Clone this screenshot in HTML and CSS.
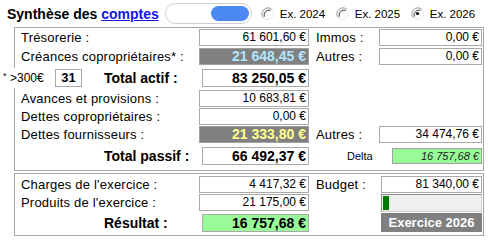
FILE: index.html
```html
<!DOCTYPE html>
<html lang="fr">
<head>
<meta charset="utf-8">
<title>Synthèse des comptes</title>
<link rel="stylesheet" href="styles.css">
</head>
<body>
<div class="head">
  <h1 class="title">Synthèse des <span class="link">comptes</span></h1>
  <div class="toggle"><span class="knob"></span></div>
  <div class="radios">
    <label class="radio"><svg width="13" height="13" viewBox="0 0 13 13"><circle cx="6.5" cy="6.5" r="6" fill="#fff" stroke="#e6e6e6"/><path d="M10.7 2.3 A6 6 0 0 0 2.3 10.7" fill="none" stroke="#a0a0a0"/><path d="M9.6 3.4 A4.8 4.8 0 0 0 3.4 9.6" fill="none" stroke="#404040"/></svg>Ex. 2024</label>
    <label class="radio"><svg width="13" height="13" viewBox="0 0 13 13"><circle cx="6.5" cy="6.5" r="6" fill="#fff" stroke="#e6e6e6"/><path d="M10.7 2.3 A6 6 0 0 0 2.3 10.7" fill="none" stroke="#a0a0a0"/><path d="M9.6 3.4 A4.8 4.8 0 0 0 3.4 9.6" fill="none" stroke="#404040"/></svg>Ex. 2025</label>
    <label class="radio"><svg width="13" height="13" viewBox="0 0 13 13"><circle cx="6.5" cy="6.5" r="6" fill="#fff" stroke="#e6e6e6"/><path d="M10.7 2.3 A6 6 0 0 0 2.3 10.7" fill="none" stroke="#a0a0a0"/><path d="M9.6 3.4 A4.8 4.8 0 0 0 3.4 9.6" fill="none" stroke="#404040"/><circle cx="6.5" cy="6.5" r="1.6" fill="#000"/></svg>Ex. 2026</label>
  </div>
</div>

<div class="group g1">
  <span class="lbl">Trésorerie :</span>
  <span class="val">61 601,60 €</span>
  <span></span>
  <span class="lbl">Immos :</span>
  <span class="val">0,00 €</span>

  <span class="lbl">Créances copropriétaires* :</span>
  <span class="val dark cyan">21 648,45 €</span>
  <span></span>
  <span class="lbl">Autres :</span>
  <span class="val">0,00 €</span>

  <div class="totcell">
    <div class="over"><span class="star">*</span><span class="small">&gt;300€</span><span class="count">31</span></div>
    <span class="totlbl">Total actif :</span>
  </div>
  <span class="val tot">83 250,05 €</span>
  <span class="span3"></span>

  <span class="lbl">Avances et provisions :</span>
  <span class="val">10 683,81 €</span>
  <span class="span3"></span>

  <span class="lbl">Dettes copropriétaires :</span>
  <span class="val">0,00 €</span>
  <span class="span3"></span>

  <span class="lbl">Dettes fournisseurs :</span>
  <span class="val dark yellow">21 333,80 €</span>
  <span></span>
  <span class="lbl">Autres :</span>
  <span class="val">34 474,76 €</span>

  <div class="totcell"><span></span><span class="totlbl">Total passif :</span></div>
  <span class="val tot">66 492,37 €</span>
  <span></span>
  <div class="delta"><span class="dlbl">Delta</span><span class="dval">16 757,68 €</span></div>
</div>

<div class="group g2">
  <span class="lbl">Charges de l'exercice :</span>
  <span class="val">4 417,32 €</span>
  <span></span>
  <span class="lbl">Budget :</span>
  <span class="val">81 340,00 €</span>

  <span class="lbl">Produits de l'exercice :</span>
  <span class="val">21 175,00 €</span>
  <span></span>
  <span></span>
  <div class="progress"><span class="fill" style="width:6px"></span></div>

  <div class="totcell"><span></span><span class="totlbl">Résultat :</span></div>
  <span class="val tot green">16 757,68 €</span>
  <span></span>
  <span></span>
  <span class="btn">Exercice 2026</span>
</div>
</body>
</html>
```

FILE: styles.css
```css
html, body {
  margin: 0;
  padding: 0;
  background: #fff;
}
body {
  width: 488px;
  height: 241px;
  overflow: hidden;
  font-family: "Liberation Sans", Arial, sans-serif;
  color: #000;
}
.head {
  height: 27px;
  display: flex;
  align-items: center;
}
.title {
  margin: 0 0 0 7px;
  font-size: 14px;
  font-weight: bold;
  white-space: nowrap;
}
.link {
  color: #1414e6;
  text-decoration: underline;
}
.toggle {
  margin-left: 6px;
  width: 87px;
  height: 21px;
  box-sizing: border-box;
  border: 1px solid #cfcfcf;
  border-radius: 11px;
  background: #fff;
  display: flex;
  justify-content: flex-end;
  align-items: center;
  padding-right: 2px;
}
.knob {
  width: 38px;
  height: 15px;
  border-radius: 8px;
  background: #4b88f2;
}
.radios {
  display: flex;
  margin-left: 9px;
}
.radio {
  width: 75px;
  display: flex;
  align-items: center;
  font-size: 11.5px;
  white-space: nowrap;
}
.radio svg {
  margin-right: 6px;
  flex: none;
}
.group {
  margin-left: 14px;
  width: 470px;
  box-sizing: border-box;
  border: 1px solid #a6a6a6;
  display: grid;
  align-items: center;
}
.g1 {
  padding: 0 1px 2px 6px;
  grid-template-columns: 178px 110px 7px 63px 103px;
  grid-template-rows: 19px 19px 23px 18px 18px 19px 24px;
}
.g2 {
  margin-top: 2px;
  padding: 1px 1px 2px 6px;
  grid-template-columns: 178px 110px 7px 65px 101px;
  grid-template-rows: 18px 19px 21px;
}
.lbl {
  font-size: 13px;
  letter-spacing: 0.2px;
  white-space: nowrap;
}
.val {
  height: 17px;
  box-sizing: border-box;
  border: 1px solid #a9a9a9;
  padding-right: 2px;
  text-align: right;
  font-size: 12px;
  line-height: 15px;
  white-space: nowrap;
  background: #fff;
}
.dark {
  background: #808080;
  border-color: #a0a0a0;
  font-weight: bold;
  font-size: 14px;
}
.cyan { color: #b3e5fc; }
.yellow { color: #ffff8c; }
.tot {
  height: 18px;
  margin-left: 3px;
  font-weight: bold;
  font-size: 14px;
  line-height: 16px;
}
.green { background: #98fb98; }
.span3 { grid-column: span 3; }
.totcell {
  display: grid;
  grid-template-columns: 83px auto;
  align-items: center;
}
.totlbl {
  font-size: 14px;
  font-weight: bold;
  white-space: nowrap;
}
.over {
  display: flex;
  align-items: center;
  margin-left: -19px;
  background: #fff;
  width: 80px;
  height: 20px;
}
.star {
  font-size: 9px;
  width: 5px;
  margin-left: 1px;
  align-self: flex-start;
  margin-top: 3px;
}
.small {
  font-size: 12px;
  margin-left: 2px;
}
.count {
  margin-left: auto;
  width: 27px;
  height: 18px;
  box-sizing: border-box;
  border: 1px solid #a9a9a9;
  font-size: 13px;
  font-weight: bold;
  line-height: 16px;
  text-align: center;
}
.delta {
  grid-column: span 2;
  display: flex;
  align-items: center;
  height: 16px;
}
.dlbl {
  font-size: 11px;
  margin-left: 31px;
  width: 45px;
}
.dval {
  flex: 1;
  height: 16px;
  box-sizing: border-box;
  border: 1px solid #a0a0a0;
  background: #98fb98;
  font-size: 11px;
  font-style: italic;
  line-height: 14px;
  text-align: right;
  padding-right: 2px;
  color: #1a1a1a;
}
.progress {
  height: 18px;
  box-sizing: border-box;
  border: 1px solid #8a8a8a;
  border-right-color: #d0d0d0;
  border-bottom-color: #d0d0d0;
  background: #efefef;
  padding: 1px;
  display: flex;
}
.fill {
  background: #007a00;
  height: 100%;
}
.btn {
  height: 19px;
  background: #808080;
  color: #fff;
  font-size: 13px;
  font-weight: bold;
  line-height: 19px;
  text-align: center;
}
```
